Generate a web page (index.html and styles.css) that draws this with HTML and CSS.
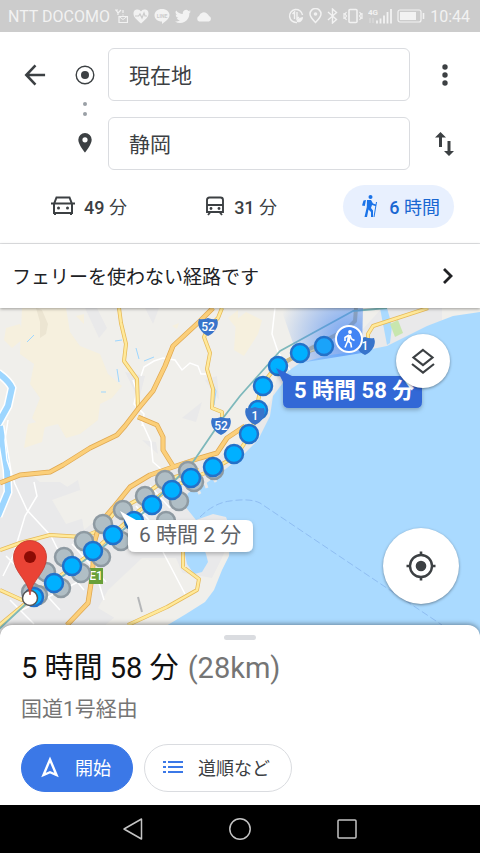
FILE: index.html
```
<!DOCTYPE html>
<html lang="ja">
<head>
  <meta charset="UTF-8">
  <meta name="viewport" content="width=device-width, initial-scale=1">
  <title>経路</title>
  <link rel="stylesheet" href="styles.css">
</head>
<body>

  <div class="statusbar">
    <span>NTT DOCOMO</span>
    <svg width="13" height="15" viewBox="0 0 13 15"><path d="M0 1h3M1 1l2 3v2M6 1L3 4M8 1v3M8 5.500v1M4 7.500h8.500v6H4z" fill="none" stroke="currentColor" stroke-width="1.200"/><path d="M4 7.500l4 3 4-3" fill="none" stroke="currentColor"/></svg>
    <svg width="16" height="15" viewBox="0 0 16 15"><path fill="currentColor" d="M8 14.500C3 10 .5 8 .5 4.500a4 4 0 0 1 7.500-2 4 4 0 0 1 7.500 2C15.500 8 13 10 8 14.500z"/><path d="M2 7h3.500l1.500-2 2 4 2-5 1 3h2" fill="none" stroke="#ccc" stroke-width="1.200"/></svg>
    <svg width="16" height="15" viewBox="0 0 16 15"><path fill="currentColor" d="M8 0c4.400 0 7.500 2.700 7.500 6 0 3.500-4 6.500-7.500 9v-2.500C3.600 12.500.5 9.500.5 6.200.5 2.700 3.600 0 8 0z"/><text x="8" y="8.500" class="line-mark">LINE</text></svg>
    <svg width="16" height="15" viewBox="0 0 24 22"><path fill="currentColor" d="M24 3.500a10 10 0 0 1-2.800.8 5 5 0 0 0 2.100-2.700 10 10 0 0 1-3.100 1.200 4.900 4.900 0 0 0-8.400 4.500A14 14 0 0 1 1.700 2.100a4.900 4.900 0 0 0 1.500 6.600A4.900 4.900 0 0 1 1 8.100a4.900 4.900 0 0 0 3.900 4.900 5 5 0 0 1-2.200.1 4.900 4.900 0 0 0 4.600 3.400A9.900 9.900 0 0 1 0 18.500 14 14 0 0 0 21.500 6z"/></svg>
    <svg width="16" height="11" viewBox="0 0 16 11"><path fill="currentColor" d="M3 10.500a3 3 0 0 1 0-5.500 5 5 0 0 1 8.500-2 4 4 0 0 1 1.500 2 2.900 2.900 0 0 1 0 5.500z"/></svg>
    <span class="spacer"></span>
    <svg width="16" height="16" viewBox="0 0 16 16"><path d="M14.500 7A6.500 6.500 0 1 0 9 14.400" fill="none" stroke="currentColor" stroke-width="1.500"/><path d="M4.500 6L6.500 4v7M9 4v7l2-2" fill="none" stroke="currentColor" stroke-width="1.400"/><path fill="currentColor" d="M9 12c1-2 3-2 6-3 0 4-3 6-6 5z"/></svg>
    <svg width="13" height="16" viewBox="0 0 13 16"><path d="M6.500 14.500C3 11 1 8.500 1 6a5.500 5.500 0 0 1 11 0c0 2.500-2 5-5.500 8.500z" fill="none" stroke="currentColor" stroke-width="1.500"/><circle cx="6.500" cy="6" r="1.800" fill="currentColor"/></svg>
    <svg width="11" height="16" viewBox="0 0 11 16"><path d="M1 4l8.500 7.500-4 3.500V1l4 3.500L1 12" fill="none" stroke="currentColor" stroke-width="1.400"/></svg>
    <svg width="20" height="16" viewBox="0 0 20 16"><rect x="6" y="1.500" width="8" height="13" rx="1" fill="none" stroke="currentColor" stroke-width="1.600"/><path d="M3.500 4l-1.500 2 1.500 2L2 10l1.500 2M1 5v6M16.500 4l1.500 2-1.500 2 1.500 2-1.500 2M19 5v6" fill="none" stroke="currentColor" stroke-width="1.200"/></svg>
    <svg width="24" height="17" viewBox="0 0 24 17"><text x="0" y="7" class="net-mark">4G</text><path d="M9 15.500v-3M12.500 15.500v-5M16 15.500v-8M19.500 15.500V4M23 15.500V1" stroke="currentColor" stroke-width="1.800"/><path d="M2 10v5M5 10v5" stroke="currentColor" stroke-opacity=".5"/></svg>
    <svg width="28" height="14" viewBox="0 0 28 14"><rect x="1" y="1" width="23" height="12" rx="2" fill="none" stroke="currentColor" stroke-width="1.200"/><rect x="3" y="3" width="16" height="8" fill="currentColor"/><path d="M26.500 4v6" stroke="currentColor" stroke-width="1.600"/></svg>
    <span>10:44</span>
  </div>

  <header class="search">
    <div class="side">
      <button class="icon-btn" aria-label="戻る">
        <svg width="22" height="22" viewBox="0 0 24 24"><path d="M23 12H3M12.500 1.500L2.500 12l10 10.500" fill="none" stroke="#3c4043" stroke-width="2.800"/></svg>
      </button>
    </div>
    <div class="stops">
      <svg width="20" height="20" viewBox="0 0 20 20"><circle cx="10" cy="10" r="8.800" fill="none" stroke="#3c4043" stroke-width="1.400"/><circle cx="10" cy="10" r="4" fill="#3c4043"/></svg>
      <svg width="4" height="14" viewBox="0 0 4 14"><circle cx="2" cy="2" r="2" fill="#9aa0a6"/><circle cx="2" cy="12" r="2" fill="#9aa0a6"/></svg>
      <svg width="14" height="20" viewBox="0 0 14 20"><path fill="#3c4043" fill-rule="evenodd" d="M7 0a6.700 6.700 0 0 0-6.700 6.700C.3 11.500 7 19.500 7 19.500s6.700-8 6.700-12.800A6.700 6.700 0 0 0 7 0zm0 4.200a2.600 2.600 0 1 1 0 5.200 2.600 2.600 0 0 1 0-5.200z"/></svg>
    </div>
    <div class="fields">
      <input type="text" value="現在地" aria-label="出発地">
      <input type="text" value="静岡" aria-label="目的地">
    </div>
    <div class="side">
      <button class="icon-btn" aria-label="メニュー">
        <svg width="6" height="22" viewBox="0 0 6 22"><g fill="#3c4043"><circle cx="3" cy="3" r="2.700"/><circle cx="3" cy="11" r="2.700"/><circle cx="3" cy="19" r="2.700"/></g></svg>
      </button>
      <button class="icon-btn" aria-label="入れ替え">
        <svg width="20" height="24" viewBox="0 0 20 24"><path fill="#3c4043" d="M5.500 0L11 5.500H7V15H4V5.500H0zM14 24l-5-5h3.500V9h3v10H19z"/></svg>
      </button>
    </div>
  </header>

  <nav class="modes">
    <button class="mode">
      <svg width="24" height="20" viewBox="0 0 24 20"><path d="M3 17V8l2.500-6.500h13L21 8v9zM0 7.500h24M4 16v3M20 16v3" fill="none" stroke="#3c4043" stroke-width="2"/><circle cx="7.500" cy="12" r="1.500" fill="#3c4043"/><circle cx="16.500" cy="12" r="1.500" fill="#3c4043"/></svg>
      <span><b>49</b> 分</span>
    </button>
    <button class="mode">
      <svg width="20" height="20" viewBox="0 0 20 20"><path d="M2 4Q2 1.500 4.500 1.500h11Q18 1.500 18 4V16H2zM2 9h16M5.500 16l-2.500 3M14.500 16l2.500 3" fill="none" stroke="#3c4043" stroke-width="1.900"/><circle cx="6" cy="12.500" r="1.400" fill="#3c4043"/><circle cx="14" cy="12.500" r="1.400" fill="#3c4043"/></svg>
      <span><b>31</b> 分</span>
    </button>
    <button class="mode active">
      <svg width="16" height="22" viewBox="0 0 16 22"><circle cx="8.500" cy="2" r="2" fill="#1a73e8"/><path fill="#1a73e8" d="M5 5h4l2 3.500 3 1v1.700L10 10l-1 3 2 2.500V22H9v-5l-2.500-2.500L5 22H2.500L4.800 12zM1.500 5.500L4 5 2.800 11 0 10.500z"/><path d="M14.500 7L12 22" stroke="#1a73e8"/></svg>
      <span><b>6</b> 時間</span>
    </button>
  </nav>

  <a class="notice" href="#">
    <span>フェリーを使わない経路です</span>
    <svg width="12" height="18" viewBox="0 0 12 18"><path d="M2 2l7 7-7 7" fill="none" stroke="#202124" stroke-width="2.800"/></svg>
  </a>

  <main class="map">
    <svg class="map-canvas" viewBox="0 308 480 330" preserveAspectRatio="xMidYMin slice">
      <defs>
        <radialGradient id="beam" gradientUnits="userSpaceOnUse" cx="349" cy="339" r="72">
          <stop offset="0" stop-color="#4285f4" stop-opacity=".75"/>
          <stop offset="1" stop-color="#4285f4" stop-opacity="0"/>
        </radialGradient>
        <filter id="drop" x="-20%" y="-20%" width="140%" height="160%">
          <feDropShadow dx="0" dy="2" stdDeviation="2" flood-opacity=".25"/>
        </filter>
        <path id="shield" d="M-9-8Q-5-7 0-9q5 2 9 1 2 5-1 10-3 5-8 7-5-2-8-7-3-5-1-10z" fill="#3874cb"/>
      </defs>

      <!-- land and sea -->
      <rect y="308" width="480" height="330" fill="#f0efeb"/>
      <g fill="#e9e9ea">
        <path d="M0 478l28-6 12 10 20 0 18 12 6 36 30-24 20-24 40-18 46-8 30-20 22-38 8-32 32-22 50-14 20-22h60v70l-90 10-40 50-30 50-40 20-20 50-10 20-34-6-50 34-38 32H0z"/>
        <path d="M85 308h12l10 20-8 10zM145 308h14l-6 16zM125 372l20 4-6 24zM205 380l12-4 2 24zM182 418l20-16-6 20zM50 498l28-18 4 18zM142 440l14 2 2 12z"/>
      </g>
      <g fill="#f0efeb">
        <path d="M108 590l34-32 34 0 6 14 10 10-34 22-40 16-20-12zM52 500l28-10 16 24-30 10zM132 440l20 10 6 20-30 8z"/>
      </g>
      <g fill="#f6f0de">
        <path d="M22 308h44l4 24 10 14 20 8 8 20 14 12-10 12-12 6-2 16-18 14-14 4-8-14-16 4-10-10 8-20-10-14 4-20-14-10z"/>
        <path d="M6 328l14-4 4 14-12 10-8-8zM76 316l8-2v10zM172 326l7-3-2 6zM236 320l10-8 16 8-4 14-14 22-10-6zM228 318l10-8v20zM28 424l18-4-4 22-18 6z"/>
      </g>
      <path d="M36 308l6 2 6 14-2 10-6 4 0-16z" fill="#ece5d2"/>
      <path d="M480 312L453 316 427 326 403 338 387 346 367 350 330 355 300 363 288 371 282 384 273 396 270 416 258 440 242 456 222 472 205 484 188 493 184 505 196 520 213 514 226 517 231 530 229 556 222 570 214 590 205 602 186 614 166 626 162 638H480z" fill="#aadaff"/>
      <path d="M178 520h14l14 34 2 8-6 10-8 2-7-10z" fill="#aadaff"/>
      <path d="M380 308h7l5 18-2 17-3 2z" fill="#aadaff"/>
      <path d="M204 480l3 8M212 476l4 6M196 486l4 8" stroke="#e9e9ea" stroke-width="3"/>
      <path d="M390 324l8-4 5 13-8 4z" fill="#c8e6ae"/>
      <path d="M-2 373q11 8 14 15l-4 18-10 18M0 426l3 20 4 24 1 22-10 24" fill="none" stroke="#fff" stroke-width="9"/>
      <path d="M-2 373q11 8 14 15l-4 18-10 18M0 426l3 20 4 24 1 22-10 24" fill="none" stroke="#9dd6ff" stroke-width="6"/>
      <path d="M27 342l7-7M115 341l7-1M136 348l3 11M144 361l10-4M117 369l2 13M101 392h5M212 383l4 8-2 14" fill="none" stroke="#9dd6ff"/>

      <!-- minor roads -->
      <g fill="none" stroke="#fff" stroke-width="1.500">
        <path d="M275 308l-3 26 6 18 12 18M141 376l3-9 10-6 9-3 12 2 7 10 8-7 8 3 3 8h5M133 380l4 12-3 12 10 10-2 12M141 420l10 22 2 20 16 14M8 420l-3 20 2 20 8 24 12 26 24 26 10 20M6 556l26 26M34 482l3 14-12 20-12 40-10 20M163 552l22 42"/>
        <path d="M40 572l20 22M58 558l26 32M72 544l34 38M98 580l6 20M22 610l60-30M14 560l24 40M60 610l-20-22M10 600l24 24M150 486l20 22M136 506l20 22"/>
      </g>
      <path d="M138 597l4 15" stroke="#b4b6b8" stroke-width="2"/>

      <!-- highways -->
      <g fill="none" stroke-linejoin="round">
        <path d="M119 308l2 15 5 21-2 17 13 18 1 29M222 308l-4 10-10 10-4 9 6 16-3 16 6 20-1 19 10 4v8M0 550l20-7 30-8 33 2 17-7 15-18 22-12 28-20 34-10M128 625l39-18 30-17 2-11-16-12v-20M0 590l22 10 10-2-36 30M428 308l-55 18-5 8v8M30 598l60-44 50-44 30-22 42-18 24-14 16-24 9-46 14-18 24-14 32-10" stroke="#e6b958" stroke-width="4"/>
        <path d="M119 308l2 15 5 21-2 17 13 18 1 29M222 308l-4 10-10 10-4 9 6 16-3 16 6 20-1 19 10 4v8M0 550l20-7 30-8 33 2 17-7 15-18 22-12 28-20 34-10M128 625l39-18 30-17 2-11-16-12v-20M0 590l22 10 10-2-36 30M428 308l-55 18-5 8v8M30 598l60-44 50-44 30-22 42-18 24-14 16-24 9-46 14-18 24-14 32-10" stroke="#ffe99a" stroke-width="2.500"/>
        <path d="M213 308l-13 13-27 25-8 20-12 25-15 18-13 17-8 9-27 13-27 17-13 7-30 3-20 8M138 417l19 8 6 12v13l10 16M245 426l-18 12-10 15-17 5-27 9-23 8-20 12-17 21-13 15-5 17-3 37-4 26-21 22" stroke="#e0a850" stroke-width="5"/>
        <path d="M213 308l-13 13-27 25-8 20-12 25-15 18-13 17-8 9-27 13-27 17-13 7-30 3-20 8M138 417l19 8 6 12v13l10 16M245 426l-18 12-10 15-17 5-27 9-23 8-20 12-17 21-13 15-5 17-3 37-4 26-21 22" stroke="#fbcf7a" stroke-width="3.500"/>
        <path d="M356 308l-1 13-8 8-30 16-30 16" stroke="#c9b88c" stroke-width="4"/>
        <path d="M387 308l-34 3-73 40-40 45-17 22-30 44-50 51-40 34-73 53-34 32" stroke="#7db8bb" stroke-width="1.800"/>
        <path d="M200 517q14-14 30-16 20-3 30 2l182 122" stroke="#8fbdf2" stroke-dasharray="7 3"/>
      </g>

      <path d="M363 306l-1 47-62 10-20-57z" fill="url(#beam)"/>

      <!-- road signs -->
      <g class="sign">
        <use href="#shield" x="208" y="327"/><text x="208" y="331">52</text>
        <use href="#shield" x="221" y="426"/><text x="221" y="430">52</text>
        <use href="#shield" x="365" y="346"/><text x="365" y="350">1</text>
        <rect x="89" y="568" width="14" height="16" fill="#689f38"/><text x="96" y="580">E1</text>
      </g>

      <g fill="#b0bec5" stroke="#8e9aa2" stroke-width="2.500">
        <circle cx="188" cy="471" r="9"/><circle cx="165" cy="480" r="9"/><circle cx="145" cy="496" r="9"/><circle cx="123" cy="510" r="9"/><circle cx="103" cy="524" r="9"/><circle cx="84" cy="541" r="9"/><circle cx="64" cy="557" r="9"/><circle cx="46" cy="572" r="9"/><circle cx="31" cy="592" r="9"/>
        <circle cx="214" cy="470" r="9"/><circle cx="194" cy="482" r="9"/><circle cx="179" cy="501" r="9"/><circle cx="166" cy="521" r="9"/><circle cx="121" cy="541" r="9"/><circle cx="101" cy="557" r="9"/><circle cx="81" cy="573" r="9"/><circle cx="61" cy="588" r="9"/><circle cx="38" cy="595" r="9"/>
      </g>
      <g fill="#00b0ff" stroke="#2471c8" stroke-width="2.500">
        <circle cx="324" cy="346" r="9" fill="#1aa3fa"/><circle cx="300" cy="353" r="9"/><circle cx="278" cy="366" r="9"/><circle cx="263" cy="386" r="9"/><circle cx="258" cy="410" r="9"/><circle cx="249" cy="434" r="9"/><circle cx="234" cy="454" r="9"/><circle cx="213" cy="467" r="9"/><circle cx="191" cy="478" r="9"/><circle cx="172" cy="490" r="9"/><circle cx="152" cy="505" r="9"/><circle cx="134" cy="521" r="9"/><circle cx="113" cy="535" r="9"/><circle cx="93" cy="551" r="9"/><circle cx="72" cy="566" r="9"/><circle cx="54" cy="583" r="9"/><circle cx="34" cy="597" r="9"/>
      </g>
      <g class="sign"><use href="#shield" x="255" y="416"/><text x="255" y="420">1</text></g>

      <!-- start -->
      <circle cx="349" cy="339" r="13" fill="#4285f4" stroke="#fff" stroke-width="2"/>
      <circle cx="350" cy="332" r="1.900" fill="#fff"/>
      <path d="M349 335l-4 2.500v3.500M350 335l1.500 4 3 1.500M348.500 336l-.8 5-2.700 6.500M348 341l2.700 2 .8 4.500M350 335l-1.200 7" fill="none" stroke="#fff" stroke-width="1.600"/>

      <!-- destination -->
      <circle cx="30" cy="598" r="7.500" fill="#fff" stroke="#555" stroke-width="1.500"/>
      <path d="M30 595c-2-16-16.500-22-16.500-38a16.500 16.500 0 0 1 33 0c0 16-14.500 22-16.500 38z" fill="#ea4335" stroke="#c5392d" stroke-width=".8"/>
      <circle cx="30" cy="557" r="6" fill="#8c0b04"/>

      <!-- travel times -->
      <g filter="url(#drop)">
        <path d="M120 511l16 9h110q7 0 7 7v18q0 7-7 7H135q-7 0-7-7v-19z" fill="#fff"/>
      </g>
      <text x="139" y="542" class="time alt">6 時間 2 分</text>
      <g filter="url(#drop)">
        <path d="M276 368l16 8h124q6 0 6 6v20q0 6-6 6H289q-6 0-6-6v-20z" fill="#3367d6"/>
      </g>
      <text x="294" y="398" class="time">5 時間 58 分</text>
    </svg>

    <button class="fab layers" aria-label="レイヤ">
      <svg width="24" height="26" viewBox="0 0 24 26"><path d="M12 2l9.500 7.500L12 17 2.500 9.500zM1 16l11 8.500L23 16" fill="none" stroke="#3c4043" stroke-width="2.200"/></svg>
    </button>
    <button class="fab locate" aria-label="現在地を表示">
      <svg width="30" height="30" viewBox="0 0 30 30"><circle cx="15" cy="15" r="11" fill="none" stroke="#3c4043" stroke-width="2.400"/><circle cx="15" cy="15" r="5.300" fill="#3c4043"/><path d="M15 .5V4M15 26v3.500M.5 15H4M26 15h3.500" stroke="#3c4043" stroke-width="2.600"/></svg>
    </button>
  </main>

  <section class="sheet">
    <div class="handle"></div>
    <h1>5 時間 58 分 <span>(28km)</span></h1>
    <p>国道1号経由</p>
    <div class="actions">
      <button class="pill primary">
        <svg width="20" height="22" viewBox="0 0 20 22"><path d="M10 3.500L16.500 19 10 16.200 3.500 19z" fill="none" stroke="#fff" stroke-width="2.400"/></svg>
        開始
      </button>
      <button class="pill">
        <svg width="20" height="14" viewBox="0 0 20 14"><path d="M5 2h15M5 7h15M5 12h15M0 2h3M0 7h3M0 12h3" stroke="#3b78e7" stroke-width="2.200"/></svg>
        道順など
      </button>
    </div>
  </section>

  <footer class="navbar">
    <button aria-label="戻る"><svg width="22" height="24" viewBox="0 0 22 24"><path d="M19.500 2v20L2 12z" fill="none" stroke="#c4c4c4" stroke-width="1.500" stroke-linejoin="round"/></svg></button>
    <button aria-label="ホーム"><svg width="24" height="24" viewBox="0 0 24 24"><circle cx="12" cy="12" r="10.200" fill="none" stroke="#c4c4c4" stroke-width="1.500"/></svg></button>
    <button aria-label="アプリ履歴"><svg width="22" height="22" viewBox="0 0 22 22"><rect x="2" y="2" width="18" height="18" rx="1" fill="none" stroke="#c4c4c4" stroke-width="1.500"/></svg></button>
  </footer>

</body>
</html>
```
FILE: styles.css
```
* { box-sizing: border-box; }
body {
  margin: 0;
  min-height: 100vh;
  display: flex;
  flex-direction: column;
  background: #fff;
  color: #3c4043;
  font-family: Roboto, "Noto Sans CJK JP", sans-serif;
}
button {
  border: 0;
  padding: 0;
  background: none;
  color: inherit;
  font: inherit;
}
svg { display: block; flex: none; }

.statusbar {
  display: flex;
  align-items: center;
  gap: 5px;
  height: 32px;
  padding: 0 10px 0 8px;
  background: #ccc;
  color: #f2f2f2;
  font-size: 16px;
}
.spacer { flex: 1; }
.line-mark { font-size: 5px; font-weight: 700; text-anchor: middle; fill: #ccc; }
.net-mark { font-size: 8px; font-weight: 700; fill: #f2f2f2; }

.search { display: flex; padding-top: 16px; }
.side {
  flex: 0 0 70px;
  display: flex;
  flex-direction: column;
  gap: 16px;
}
.icon-btn {
  display: flex;
  align-items: center;
  justify-content: center;
  height: 53px;
}
.stops {
  flex: 0 0 30px;
  display: flex;
  flex-direction: column;
  align-items: center;
  justify-content: space-between;
  padding: 17px 0;
}
.fields {
  flex: 1;
  display: flex;
  flex-direction: column;
  gap: 16px;
  margin-left: 8px;
}
.fields input {
  width: 100%;
  height: 53px;
  padding: 0 20px 2px;
  border: 1px solid #dadce0;
  border-radius: 6px;
  color: #3c4043;
  font: 21px Roboto, "Noto Sans CJK JP", sans-serif;
}

.modes {
  display: flex;
  justify-content: space-between;
  padding: 15px 26px 15px 39px;
  border-bottom: 1px solid #e4e5e7;
}
.mode {
  display: flex;
  align-items: center;
  gap: 9px;
  height: 43px;
  padding: 0 12px 2px;
  border-radius: 22px;
  font-size: 18px;
}
.mode b { font-weight: 500; }
.mode.active {
  gap: 11px;
  padding: 0 14px 2px 19px;
  background: #e8f0fe;
  color: #1967d2;
}

.notice {
  position: relative;
  z-index: 1;
  display: flex;
  align-items: center;
  justify-content: space-between;
  height: 64px;
  padding: 0 26px 1px 12px;
  background: #fff;
  box-shadow: 0 1px 3px rgba(0, 0, 0, .35);
  color: #202124;
  font-size: 19px;
  text-decoration: none;
}

.map {
  position: relative;
  flex: 1;
  min-height: 330px;
  overflow: hidden;
  background: #aadaff;
}
.map-canvas {
  position: absolute;
  width: 100%;
  height: 100%;
}
.sign text { font-size: 12px; font-weight: 500; text-anchor: middle; fill: #fff; }
.time { font-size: 22px; font-weight: 700; fill: #fff; }
.time.alt { font-size: 21px; font-weight: 400; fill: #5f6368; }
.fab {
  position: absolute;
  display: flex;
  align-items: center;
  justify-content: center;
  border-radius: 50%;
  background: #fff;
  box-shadow: 0 1px 3px rgba(0, 0, 0, .4);
}
.layers { top: 26px; right: 30px; width: 54px; height: 54px; }
.locate { right: 21px; bottom: 34px; width: 76px; height: 76px; }

.sheet {
  position: relative;
  margin-top: -13px;
  padding: 10px 21px 13px;
  border-radius: 12px 12px 0 0;
  background: #fff;
  box-shadow: 0 -1px 5px rgba(0, 0, 0, .4);
}
.handle {
  width: 32px;
  height: 5px;
  margin: 0 auto;
  border-radius: 3px;
  background: #dadce0;
}
.sheet h1 {
  margin: 8px 0 0;
  color: #111;
  font-size: 29px;
  font-weight: 400;
  line-height: 40px;
}
.sheet h1 span { margin-left: 2px; color: #757575; }
.sheet p {
  margin: 6px 0 0;
  color: #757575;
  font-size: 21px;
  line-height: 30px;
}
.actions { display: flex; gap: 11px; margin-top: 20px; }
.pill {
  display: flex;
  align-items: center;
  gap: 15px;
  height: 48px;
  padding: 0 21px 2px 18px;
  border: 1px solid #dadce0;
  border-radius: 24px;
  font-size: 18px;
}
.pill.primary { border-color: #3b78e7; background: #3b78e7; color: #fff; }

.navbar {
  position: relative;
  display: flex;
  align-items: center;
  justify-content: center;
  gap: 84px;
  height: 48px;
  background: #000;
}
```
